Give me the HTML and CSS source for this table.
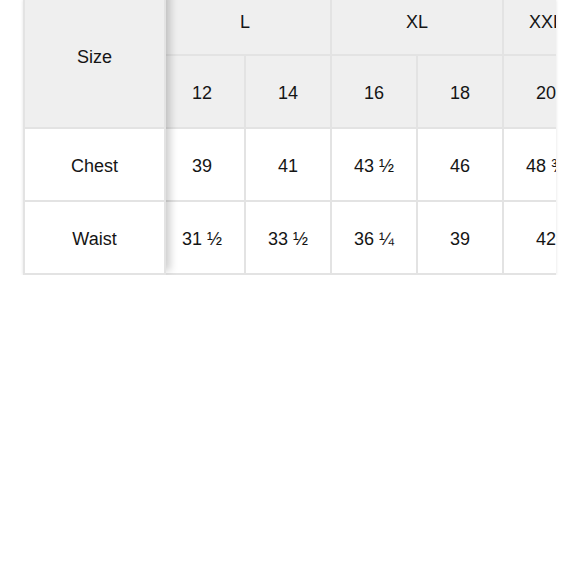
FILE: index.html
```html
<!DOCTYPE html>
<html>
<head>
<meta charset="utf-8">
<link rel="stylesheet" href="styles.css">
</head>
<body>
<div class="frame">
  <div class="fixed">
    <div class="cell head size">Size</div>
    <div class="cell">Chest</div>
    <div class="cell">Waist</div>
  </div>
  <div class="scroll">
    <div class="grid">
      <div class="cell head top span2">L</div>
      <div class="cell head top span2">XL</div>
      <div class="cell head top">XXL</div>
      <div class="cell head">12</div>
      <div class="cell head">14</div>
      <div class="cell head">16</div>
      <div class="cell head">18</div>
      <div class="cell head">20</div>
      <div class="cell">39</div>
      <div class="cell">41</div>
      <div class="cell">43 ½</div>
      <div class="cell">46</div>
      <div class="cell">48 ¾</div>
      <div class="cell">31 ½</div>
      <div class="cell">33 ½</div>
      <div class="cell">36 ¼</div>
      <div class="cell">39</div>
      <div class="cell">42</div>
    </div>
  </div>
</div>
</body>
</html>
```
FILE: styles.css
```css
html, body {
  margin: 0;
  background: #ffffff;
}
body {
  font-family: "Liberation Sans", Arial, sans-serif;
  font-size: 18px;
  color: #151515;
}
.frame {
  margin-left: 23px;
  width: 533px;
  display: flex;
  overflow: hidden;
  box-shadow: 0 0 3px rgba(0, 0, 0, 0.12);
}
.fixed {
  flex: none;
  width: 143px;
  box-sizing: border-box;
  border-left: 2px solid #e3e3e3;
  border-right: 2px solid #e3e3e3;
  margin-top: -13px;
  position: relative;
  z-index: 1;
  background: #fff;
  box-shadow: 8px 0 8px -4px rgba(0, 0, 0, 0.2);
}
.cell {
  box-sizing: border-box;
  height: 73px;
  padding-top: 4px;
  display: flex;
  align-items: center;
  justify-content: center;
  border-bottom: 2px solid #e3e3e3;
  background: #ffffff;
  white-space: nowrap;
}
.fixed .size {
  height: 142px;
  padding-top: 0;
}
.head {
  background: #efefef;
}
.scroll {
  flex: 1;
  overflow: hidden;
}
.grid {
  display: grid;
  grid-template-columns: repeat(5, 86px);
  grid-template-rows: 69px 73px 73px 73px;
  margin-left: -6px;
  margin-top: -13px;
  width: 430px;
}
.grid .cell {
  height: auto;
  border-right: 2px solid #e3e3e3;
}
.span2 {
  grid-column: span 2;
}
```
